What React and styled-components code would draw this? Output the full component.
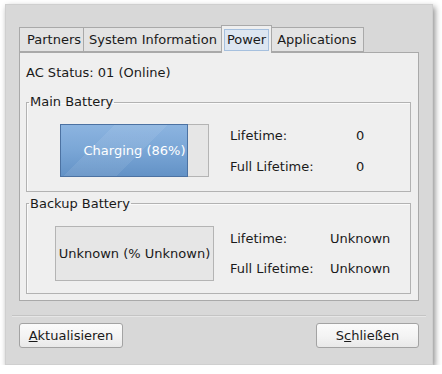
import React from 'react';
import styled, { createGlobalStyle } from 'styled-components';

const GlobalStyle = createGlobalStyle`
  html, body {
    margin: 0;
    padding: 0;
    background: #ffffff;
  }
  body {
    font-family: "DejaVu Sans", "Liberation Sans", sans-serif;
    font-size: 13px;
    color: #1a1a1a;
  }
`;

const Window = styled.div`
  box-sizing: border-box;
  margin: 4px 0 0 5px;
  width: 428px;
  height: 361px;
  background: #d8d8d8;
  border: 1px solid #cfcfcf;
  box-shadow: 2px 3px 6px rgba(0, 0, 0, 0.45);
  padding: 21px 13px 0 13px;
  display: flex;
  flex-direction: column;
`;

const TabBar = styled.div`
  display: flex;
  align-items: flex-end;
  height: 26px;
  position: relative;
  z-index: 1;
`;

const Tab = styled.div`
  box-sizing: border-box;
  height: ${(p) => (p.$active ? '28px' : '25px')};
  margin-bottom: ${(p) => (p.$active ? '-1px' : '0')};
  padding: 0 ${(p) => p.$pr || 3}px 0 ${(p) => p.$pl || 5}px;
  display: flex;
  align-items: center;
  background: ${(p) => (p.$active ? '#efefef' : '#e3e3e3')};
  border: 1px solid #a9a9a9;
  border-bottom: ${(p) => (p.$active ? 'none' : '1px solid #a9a9a9')};
  margin-left: -1px;
  white-space: nowrap;
  &:first-child {
    margin-left: 0;
  }
`;

const Focus = styled.span`
  padding: 3px 2px;
  background: #dde6f1;
  border: 1px solid #a6c0de;
  line-height: 14px;
`;

const Pane = styled.div`
  box-sizing: border-box;
  width: 400px;
  height: 249px;
  background: #efefef;
  border: 1px solid #a9a9a9;
  padding: 12px 7px 6px 6px;
  display: flex;
  flex-direction: column;
`;

const Status = styled.div`
  line-height: 16px;
  margin-bottom: 13px;
`;

const Group = styled.fieldset`
  box-sizing: border-box;
  margin: 0 0 ${(p) => p.$mb || 0}px 0;
  min-width: 0;
  height: ${(p) => p.$h}px;
  border: 1px solid #b2b2b2;
  box-shadow: inset 1px 1px 0 #fafafa;
  padding: 0;
  display: flex;
  align-items: center;
`;

const Legend = styled.legend`
  padding: 0 1px;
  margin-left: 2px;
  line-height: 16px;
`;

const Content = styled.div`
  display: flex;
  align-items: center;
  width: 100%;
  box-sizing: border-box;
  padding-left: ${(p) => p.$pl}px;
  margin-top: ${(p) => p.$mt || 0}px;
`;

const Bar = styled.div`
  box-sizing: border-box;
  position: relative;
  width: ${(p) => p.$w}px;
  height: ${(p) => p.$h}px;
  background: #e6e6e6;
  border: 1px solid #b4b4b4;
  display: flex;
  align-items: center;
  justify-content: center;
  color: ${(p) => (p.$light ? '#ffffff' : '#1a1a1a')};
  flex-shrink: 0;
`;

const Fill = styled.div`
  position: absolute;
  left: -1px;
  top: -1px;
  bottom: -1px;
  box-sizing: border-box;
  border: 1px solid #4c72a2;
  background:
    linear-gradient(135deg, rgba(255, 255, 255, 0) 30%, rgba(255, 255, 255, 0.08) 30%, rgba(255, 255, 255, 0.08) 60%, rgba(255, 255, 255, 0) 60%),
    linear-gradient(to bottom, #8cb4e0 0%, #7aa6d6 50%, #6392c6 100%);
`;

const BarText = styled.span`
  position: relative;
`;

const Info = styled.div`
  display: grid;
  grid-template-columns: ${(p) => p.$lw}px auto;
  row-gap: ${(p) => p.$gap}px;
  margin-left: ${(p) => p.$ml}px;
  margin-top: ${(p) => p.$mt || 0}px;
  line-height: 16px;
`;

const Footer = styled.div`
  margin: 14px -7px 0 -7px;
  border-top: 1px solid #c4c4c4;
  box-shadow: 0 1px 0 #e6e6e6 inset;
  padding: 7px 7px 0 7px;
  display: flex;
  justify-content: space-between;
`;

const Button = styled.button`
  box-sizing: border-box;
  width: ${(p) => p.$w}px;
  height: 25px;
  font-family: inherit;
  font-size: 13px;
  color: #1a1a1a;
  background: linear-gradient(to bottom, #fbfbfb 0%, #f3f3f3 55%, #e9e9e9 100%);
  border: 1px solid #a3a3a3;
  border-radius: 3px;
  padding: 0;
  u {
    text-decoration: underline;
  }
`;

const App = () => {
  return (
    <>
      <GlobalStyle />
      <Window>
        <TabBar>
          <Tab $pl={7} $pr={2}>Partners</Tab>
          <Tab $pl={5} $pr={4}>System Information</Tab>
          <Tab $active $pl={2} $pr={2}><Focus>Power</Focus></Tab>
          <Tab $pl={5} $pr={6}>Applications</Tab>
        </TabBar>
        <Pane>
          <Status>AC Status: 01 (Online)</Status>
          <Group $h={98} $mb={4}>
            <Legend>Main Battery</Legend>
            <Content $pl={33} $mt={0}>
              <Bar $w={149} $h={53} $light>
                <Fill style={{ width: `${Math.round(149 * 0.86)}px` }} />
                <BarText>Charging (86%)</BarText>
              </Bar>
              <Info $lw={126} $gap={15} $ml={21} $mt={2}>
                <span>Lifetime:</span><span>0</span>
                <span>Full Lifetime:</span><span>0</span>
              </Info>
            </Content>
          </Group>
          <Group $h={99}>
            <Legend>Backup Battery</Legend>
            <Content $pl={28} $mt={3}>
              <Bar $w={159} $h={55}>
                <BarText>Unknown (% Unknown)</BarText>
              </Bar>
              <Info $lw={100} $gap={14} $ml={16}>
                <span>Lifetime:</span><span>Unknown</span>
                <span>Full Lifetime:</span><span>Unknown</span>
              </Info>
            </Content>
          </Group>
        </Pane>
        <Footer>
          <Button $w={104}><u>A</u>ktualisieren</Button>
          <Button $w={103}>S<u>c</u>hließen</Button>
        </Footer>
      </Window>
    </>
  );
};

export default App;
